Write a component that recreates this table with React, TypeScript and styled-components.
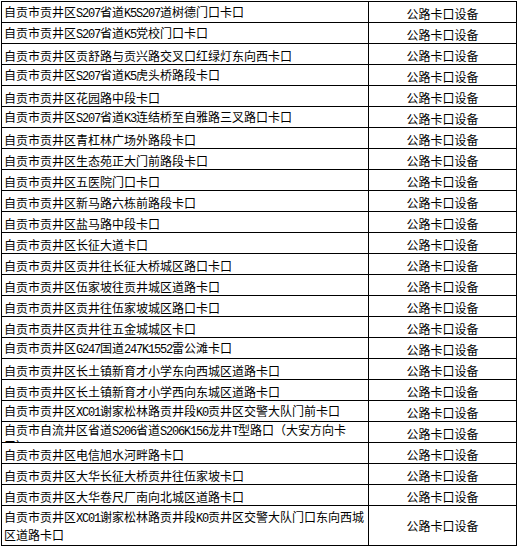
import React from "react";
import styled, {createGlobalStyle} from "styled-components";

const GlobalStyle = createGlobalStyle`
  body {
    margin: 0;
    background: #fff;
  }
`;

type VAlign = "top" | "center" | "bottom";

interface Row {
    name: string;
    height?: number;
    align?: VAlign;
    spacing?: number;
}

const rows: Row[] = [
    {name: "自贡市贡井区S207省道K5S207道树德门口卡口"},
    {name: "自贡市贡井区S207省道K5党校门口卡口"},
    {name: "自贡市贡井区贡舒路与贡兴路交叉口红绿灯东向西卡口"},
    {name: "自贡市贡井区S207省道K5虎头桥路段卡口"},
    {name: "自贡市贡井区花园路中段卡口"},
    {name: "自贡市贡井区S207省道K3连结桥至自雅路三叉路口卡口"},
    {name: "自贡市贡井区青杠林广场外路段卡口"},
    {name: "自贡市贡井区生态苑正大门前路段卡口"},
    {name: "自贡市贡井区五医院门口卡口"},
    {name: "自贡市贡井区新马路六栋前路段卡口"},
    {name: "自贡市贡井区盐马路中段卡口"},
    {name: "自贡市贡井区长征大道卡口"},
    {name: "自贡市贡井区贡井往长征大桥城区路口卡口"},
    {name: "自贡市贡井区伍家坡往贡井城区道路卡口"},
    {name: "自贡市贡井区贡井往伍家坡城区路口卡口"},
    {name: "自贡市贡井区贡井往五金城城区卡口"},
    {name: "自贡市贡井区G247国道247K1552雷公滩卡口"},
    {name: "自贡市贡井区长土镇新育才小学东向西城区道路卡口"},
    {name: "自贡市贡井区长土镇新育才小学西向东城区道路卡口"},
    {name: "自贡市贡井区XC01谢家松林路贡井段K0贡井区交警大队门前卡口"},
    // wrapped cell, second line is cut off by the row height
    {name: "自贡市自流井区省道S206省道S206K156龙井T型路口（大安方向卡\n口）", align: "top", spacing: 14},
    {name: "自贡市贡井区电信旭水河畔路卡口"},
    {name: "自贡市贡井区大华长征大桥贡井往伍家坡卡口"},
    {name: "自贡市贡井区大华卷尺厂南向北城区道路卡口"},
    {name: "自贡市贡井区XC01谢家松林路贡井段K0贡井区交警大队门口东向西城\n区道路卡口", height: 40},
];

const Sheet = styled.div`
  display: grid;
  grid-template-columns: 367px 148px;
  width: max-content;
  margin: 1px 0 0 1px;
  border-top: 1px solid #000;
  border-left: 1px solid #000;
  color: #000;
  font-family: "Noto Sans CJK SC", sans-serif;
  font-size: 12px;
`;

const Cell = styled.div<{ $height: number; $align: VAlign; $center?: boolean; $pb: number }>`
  box-sizing: border-box;
  height: ${p => p.$height}px;
  display: flex;
  align-items: ${p => p.$align === "top" ? "flex-start" : p.$align === "center" ? "center" : "flex-end"};
  justify-content: ${p => p.$center ? "center" : "flex-start"};
  padding: ${p => p.$align === "top" ? "1px" : "0"} 2px ${p => p.$pb}px;
  border-right: 1px solid #000;
  border-bottom: 1px solid #000;
  overflow: hidden;
`;

const Text = styled.div<{ $lh: number }>`
  line-height: ${p => p.$lh}px;
  white-space: pre;
`;

const Latin = styled.span`
  font-family: "Liberation Mono", monospace;
  font-size: 12px;
  letter-spacing: -1.2px;
`;

const withLatin = (s: string) =>
    s.split(/([A-Za-z0-9]+)/).map((part, i) =>
        /^[A-Za-z0-9]+$/.test(part) ? <Latin key={i}>{part}</Latin> : part
    );

const App: React.FC = () => {
    return (
        <>
            <GlobalStyle/>
            <Sheet>
                {rows.map((r, i) => {
                    const h = r.height ?? 21;
                    const tall = h > 21;
                    return (
                        <React.Fragment key={i}>
                            <Cell $height={h} $align={r.align ?? "bottom"} $pb={tall ? 2 : 0}>
                                <Text $lh={r.spacing ?? 16}>{withLatin(r.name)}</Text>
                            </Cell>
                            <Cell $height={h} $align={tall ? "center" : "bottom"} $center $pb={0}>
                                <Text $lh={16}>公路卡口设备</Text>
                            </Cell>
                        </React.Fragment>
                    );
                })}
            </Sheet>
        </>
    );
}

export default App
